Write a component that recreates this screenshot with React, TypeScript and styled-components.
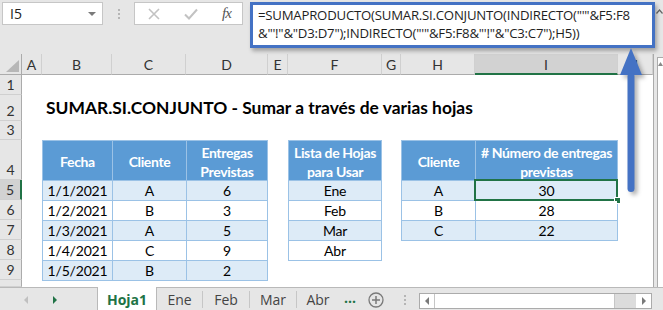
import React from "react";
import styled, { createGlobalStyle, css } from "styled-components";

const GlobalStyle = createGlobalStyle`
  html, body {
    margin: 0;
    padding: 0;
    background: #fff;
  }
  body {
    font-family: Lato, "Noto Sans", sans-serif;
  }
`;

const CALIBRI = `Lato, "Noto Sans", sans-serif`;
const SEGOE = `"Open Sans", "Noto Sans", sans-serif`;

const Frame = styled.div`
  position: relative;
  width: 663px;
  height: 310px;
  overflow: hidden;
  background: #e6e6e6;
  display: flex;
  flex-direction: column;
`;

/* ---------- formula bar ---------- */

const FormulaBar = styled.div`
  height: 54px;
  flex: none;
  display: flex;
  align-items: flex-start;
  padding: 2px 0 0 2px;
  box-sizing: border-box;
`;

const NameBox = styled.div`
  width: 101px;
  height: 23px;
  box-sizing: border-box;
  background: #fff;
  border: 1px solid #c6c6c6;
  display: flex;
  align-items: center;
  justify-content: space-between;
  padding: 0 6px 0 7px;
  font: 14px ${SEGOE};
  color: #222;
`;

const Caret = styled.span`
  width: 0;
  height: 0;
  border-left: 4px solid transparent;
  border-right: 4px solid transparent;
  border-top: 4px solid #7a7a7a;
`;

const Grip = styled.div`
  width: 31px;
  height: 23px;
  display: flex;
  flex-direction: column;
  align-items: center;
  justify-content: center;
  gap: 2px;
  span {
    width: 2px;
    height: 2px;
    background: #b5b5b5;
  }
`;

const FxBox = styled.div`
  width: 109px;
  height: 23px;
  box-sizing: border-box;
  background: #fff;
  border: 1px solid #c6c6c6;
  display: grid;
  grid-template-columns: 37px 37px 35px;
  align-items: center;
  justify-items: center;
`;

const Fx = styled.span`
  font: italic 15px "Liberation Serif", serif;
  color: #555;
  letter-spacing: -1px;
`;

const FormulaBox = styled.div`
  margin-left: 7px;
  width: 405px;
  height: 46px;
  box-sizing: border-box;
  background: #fff;
  border: 3px solid #4472c4;
  box-shadow: 2px 3px 4px rgba(0, 0, 0, 0.3);
  padding: 1px 0 0 5px;
  font: 13.2px ${SEGOE};
  letter-spacing: -0.22px;
  line-height: 18px;
  color: #1e1e1e;
  white-space: nowrap;
  overflow: hidden;
  position: relative;
  z-index: 2;
`;

const Collapse = styled.div`
  width: 8px;
  display: flex;
  justify-content: center;
  padding-top: 7px;
`;

/* ---------- sheet ---------- */

const SheetArea = styled.div`
  display: flex;
  height: 233px;
  flex: none;
`;

const Sheet = styled.div`
  display: grid;
  grid-template-columns: 22px 20px 70px 74px 82px 20px 94px 19px 74px 143px 35px;
  grid-template-rows: 21px 20px 26px 19px 40px 20px 20px 20px 20px 20px 7px;
  background: #fff;
  width: 653px;
`;

const Corner = styled.div`
  grid-column: 1;
  grid-row: 1;
  background: #e6e6e6;
  border-right: 1px solid #ababab;
  border-bottom: 1px solid #ababab;
  position: relative;
  &::after {
    content: "";
    position: absolute;
    right: 2px;
    bottom: 2px;
    border-left: 13px solid transparent;
    border-bottom: 12px solid #b7b7b7;
  }
`;

const ColHead = styled.div<{ $col: number; $active?: boolean }>`
  grid-column: ${(p) => p.$col};
  grid-row: 1;
  background: ${(p) => (p.$active ? "#d2d2d2" : "#e6e6e6")};
  border-right: 1px solid #d0d0d0;
  border-bottom: ${(p) => (p.$active ? "2px solid #217346" : "1px solid #ababab")};
  display: flex;
  align-items: center;
  justify-content: center;
  font: 14px ${CALIBRI};
  color: #333;
  padding-top: 1px;
`;

const RowHead = styled.div<{ $row: number; $active?: boolean }>`
  grid-column: 1;
  grid-row: ${(p) => p.$row};
  background: ${(p) => (p.$active ? "#d2d2d2" : "#e6e6e6")};
  border-right: ${(p) => (p.$active ? "2px solid #217346" : "1px solid #ababab")};
  border-bottom: 1px solid #d0d0d0;
  display: flex;
  align-items: flex-end;
  justify-content: center;
  padding-bottom: 1px;
  font: 14px ${CALIBRI};
  color: #333;
`;

const Title = styled.div`
  grid-column: 3 / 12;
  grid-row: 3;
  align-self: end;
  padding: 0 0 3px 4px;
  font: bold 17.4px ${CALIBRI};
  color: #000;
  white-space: nowrap;
`;

const Table = styled.div<{ $col: string; $row: string; $widths: string }>`
  grid-column: ${(p) => p.$col};
  grid-row: ${(p) => p.$row};
  align-self: start;
  display: grid;
  grid-template-columns: ${(p) => p.$widths};
  grid-template-rows: 39px;
  grid-auto-rows: 19px;
  gap: 1px;
  padding: 1px;
  background: #9bc2e6;
  position: relative;
  z-index: 1;
`;

const Cell = styled.div<{ $head?: boolean; $alt?: boolean; $selected?: boolean }>`
  display: flex;
  flex-direction: column;
  align-items: center;
  justify-content: center;
  text-align: center;
  white-space: nowrap;
  font: 14px ${CALIBRI};
  letter-spacing: -0.2px;
  line-height: 19px;
  color: #000;
  background: #fff;
  position: relative;
  ${(p) =>
    p.$alt &&
    css`
      background: #ddebf7;
    `}
  ${(p) =>
    p.$head &&
    css`
      background: #5b9bd5;
      color: #fff;
      font-weight: bold;
      letter-spacing: -0.35px;
      padding-top: 2px;
    `}
  ${(p) =>
    p.$selected &&
    css`
      &::before {
        content: "";
        position: absolute;
        inset: -2px -1px -1px -2px;
        border: 2px solid #217346;
      }
      &::after {
        content: "";
        position: absolute;
        right: -4px;
        bottom: -4px;
        width: 5px;
        height: 5px;
        background: #217346;
        border: 1px solid #fff;
      }
    `}
`;

const VScroll = styled.div`
  width: 10px;
  background: #e6e6e6;
  border-left: 1px solid #ababab;
  box-sizing: border-box;
  padding: 3px 0 0 3px;
  display: flex;
`;

const VTrack = styled.div`
  flex: 1;
  background: #fff;
  border-left: 1px solid #ababab;
  border-top: 1px solid #ababab;
  display: flex;
  justify-content: center;
  padding-top: 4px;
`;

/* ---------- tab bar ---------- */

const TabBar = styled.div`
  flex: 1;
  display: flex;
  align-items: stretch;
  border-top: 1px solid #b9b9b9;
  background: #e6e6e6;
  box-sizing: border-box;
`;

const Nav = styled.div`
  width: 97px;
  display: flex;
  align-items: center;
  padding-left: 24px;
  gap: 25px;
  box-sizing: border-box;
`;

const Tri = styled.span<{ $dir: "l" | "r"; $color: string }>`
  width: 0;
  height: 0;
  border-top: 4px solid transparent;
  border-bottom: 4px solid transparent;
  ${(p) =>
    p.$dir === "l"
      ? css`
          border-right: 4px solid ${p.$color};
        `
      : css`
          border-left: 4px solid ${p.$color};
        `}
`;

const Tab = styled.div<{ $w: number; $active?: boolean }>`
  width: ${(p) => p.$w}px;
  display: flex;
  align-items: center;
  justify-content: center;
  font: 14px ${SEGOE};
  color: #444;
  box-sizing: border-box;
  ${(p) =>
    p.$active &&
    css`
      background: #fff;
      border-left: 1px solid #b9b9b9;
      border-right: 1px solid #b9b9b9;
      color: #217346;
      font-weight: bold;
      margin-top: -1px;
    `}
`;

const TabSep = styled.span`
  width: 1px;
  height: 17px;
  align-self: center;
  background: #c6c6c6;
`;

const More = styled.div`
  width: 22px;
  display: flex;
  align-items: center;
  justify-content: center;
  font: bold 14px ${SEGOE};
  color: #217346;
  padding-bottom: 4px;
  box-sizing: border-box;
`;

const AddSheet = styled.div`
  width: 30px;
  display: flex;
  align-items: center;
  justify-content: center;
`;

const Dots = styled.div`
  width: 28px;
  display: flex;
  flex-direction: column;
  align-items: center;
  justify-content: center;
  gap: 2px;
  span {
    width: 2px;
    height: 2px;
    background: #b5b5b5;
  }
`;

const HScroll = styled.div`
  width: 233px;
  height: 16px;
  margin-top: 5px;
  box-sizing: border-box;
  border: 1px solid #ababab;
  background: #fff;
  display: flex;
`;

const ScrollBtn = styled.div<{ $w: number }>`
  width: ${(p) => p.$w}px;
  display: flex;
  align-items: center;
  justify-content: center;
`;

const Thumb = styled.div`
  width: 179px;
  background: #fff;
  border-left: 1px solid #c6c6c6;
  border-right: 1px solid #c6c6c6;
`;

const ScrollTrack = styled.div`
  flex: 1;
  background: #dcdcdc;
`;

const ArrowLayer = styled.svg`
  position: absolute;
  left: 614px;
  top: 45px;
  overflow: visible;
  z-index: 3;
  filter: drop-shadow(3px 3px 2px rgba(0, 0, 0, 0.3));
`;

const columns = ["A", "B", "C", "D", "E", "F", "G", "H", "I", "J"];

const orders = [
  ["1/1/2021", "A", "6"],
  ["1/2/2021", "B", "3"],
  ["1/3/2021", "A", "5"],
  ["1/4/2021", "C", "9"],
  ["1/5/2021", "B", "2"],
];

const sheets = ["Ene", "Feb", "Mar", "Abr"];

const totals = [
  ["A", "30"],
  ["B", "28"],
  ["C", "22"],
];

export default function App() {
  return (
    <Frame>
      <GlobalStyle />
      <FormulaBar>
        <NameBox>
          I5
          <Caret />
        </NameBox>
        <Grip>
          <span />
          <span />
          <span />
        </Grip>
        <FxBox>
          <svg width="12" height="12" viewBox="0 0 12 12">
            <path d="M1 1 L11 11 M11 1 L1 11" stroke="#c2c2c2" strokeWidth="1.6" />
          </svg>
          <svg width="14" height="12" viewBox="0 0 14 12">
            <path d="M1 6.5 L5 10.5 L13 1.5" stroke="#c2c2c2" strokeWidth="2" fill="none" />
          </svg>
          <Fx>fx</Fx>
        </FxBox>
        <FormulaBox>
          <div>=SUMAPRODUCTO(SUMAR.SI.CONJUNTO(INDIRECTO("'"&amp;F5:F8</div>
          <div>&amp;"'!"&amp;"D3:D7");INDIRECTO("'"&amp;F5:F8&amp;"'!"&amp;"C3:C7");H5))</div>
        </FormulaBox>
        <Collapse>
          <svg width="7" height="5" viewBox="0 0 7 5">
            <path d="M0.5 4.5 L3.5 1 L6.5 4.5" stroke="#666" strokeWidth="1.2" fill="none" />
          </svg>
        </Collapse>
      </FormulaBar>

      <SheetArea>
        <Sheet>
          <Corner />
          {columns.map((c, i) => (
            <ColHead key={c} $col={i + 2} $active={c === "I"}>
              {c}
            </ColHead>
          ))}
          {[1, 2, 3, 4, 5, 6, 7, 8, 9, 10].map((r) => (
            <RowHead key={r} $row={r + 1} $active={r === 5}>
              {r <= 9 ? r : ""}
            </RowHead>
          ))}

          <Title>SUMAR.SI.CONJUNTO - Sumar a través de varias hojas</Title>

          <Table $col="3 / 6" $row="5 / 11" $widths="69px 73px 80px">
            <Cell $head>Fecha</Cell>
            <Cell $head>Cliente</Cell>
            <Cell $head>
              <span>Entregas</span>
              <span>Previstas</span>
            </Cell>
            {orders.map((row, i) =>
              row.map((v, j) => (
                <Cell key={`${i}-${j}`} $alt={i % 2 === 0}>
                  {v}
                </Cell>
              ))
            )}
          </Table>

          <Table $col="7" $row="5 / 10" $widths="92px">
            <Cell $head>
              <span>Lista de Hojas</span>
              <span>para Usar</span>
            </Cell>
            {sheets.map((s, i) => (
              <Cell key={s} $alt={i % 2 === 0}>
                {s}
              </Cell>
            ))}
          </Table>

          <Table $col="9 / 11" $row="5 / 9" $widths="73px 141px">
            <Cell $head>Cliente</Cell>
            <Cell $head>
              <span># Número de entregas</span>
              <span>previstas</span>
            </Cell>
            {totals.map(([c, n], i) => (
              <React.Fragment key={c}>
                <Cell $alt={i % 2 === 0}>{c}</Cell>
                <Cell $alt={i % 2 === 0} $selected={i === 0}>
                  {n}
                </Cell>
              </React.Fragment>
            ))}
          </Table>
        </Sheet>
        <VScroll>
          <VTrack>
            <svg width="5" height="4" viewBox="0 0 5 4">
              <path d="M0 4 L2.5 0 L5 4 Z" fill="#8a8a8a" />
            </svg>
          </VTrack>
        </VScroll>
      </SheetArea>

      <TabBar>
        <Nav>
          <Tri $dir="l" $color="#c0c0c0" />
          <Tri $dir="r" $color="#217346" />
        </Nav>
        <Tab $w={60} $active>
          Hoja1
        </Tab>
        <Tab $w={45}>Ene</Tab>
        <TabSep />
        <Tab $w={46}>Feb</Tab>
        <TabSep />
        <Tab $w={46}>Mar</Tab>
        <TabSep />
        <Tab $w={42}>Abr</Tab>
        <More>...</More>
        <AddSheet>
          <svg width="16" height="16" viewBox="0 0 16 16">
            <circle cx="8" cy="8" r="7" stroke="#7a7a7a" strokeWidth="1.3" fill="none" />
            <path d="M8 4 V12 M4 8 H12" stroke="#7a7a7a" strokeWidth="1.5" />
          </svg>
        </AddSheet>
        <Dots>
          <span />
          <span />
          <span />
        </Dots>
        <HScroll>
          <ScrollBtn $w={14}>
            <Tri $dir="l" $color="#7a7a7a" />
          </ScrollBtn>
          <Thumb />
          <ScrollTrack />
          <ScrollBtn $w={15}>
            <Tri $dir="r" $color="#7a7a7a" />
          </ScrollBtn>
        </HScroll>
      </TabBar>

      <ArrowLayer width="30" height="152" viewBox="0 0 30 152">
        <path d="M17 3 L28 30 L6 30 Z" fill="#4472c4" />
        <rect x="13.5" y="28" width="7" height="119" rx="3.5" fill="#4472c4" />
      </ArrowLayer>
    </Frame>
  );
}
